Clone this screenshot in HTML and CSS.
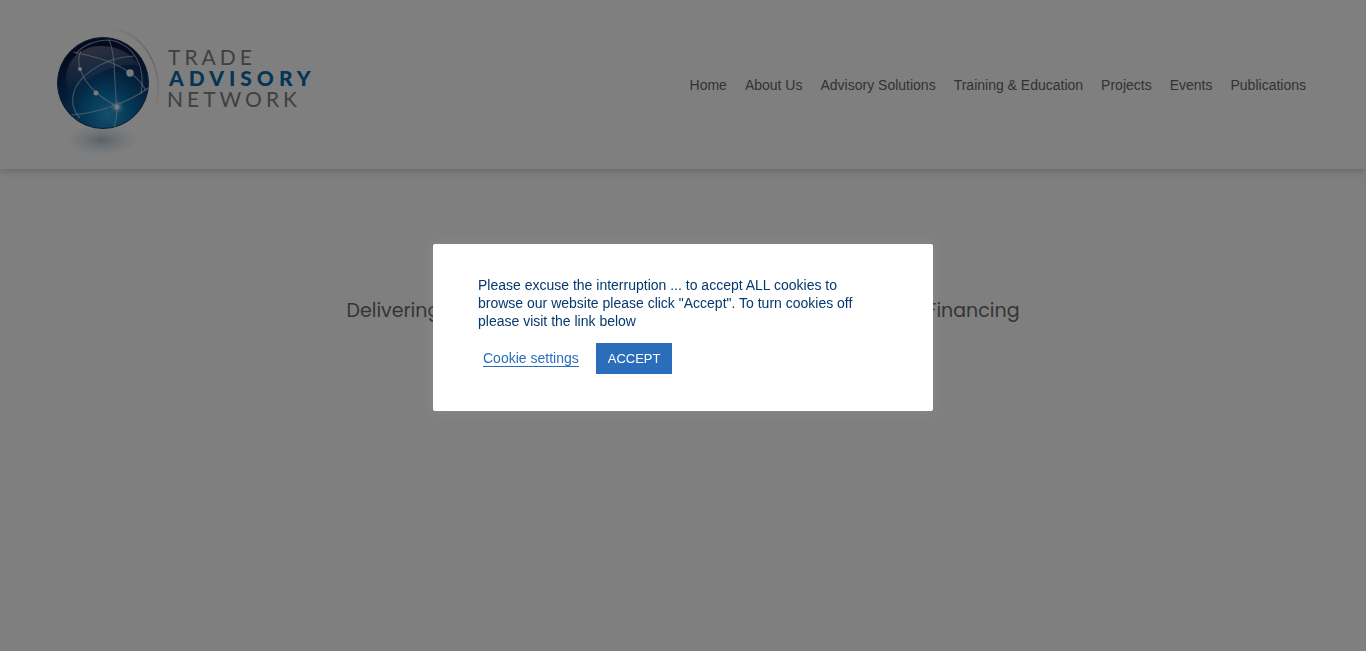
FILE: index.html
```html
<!DOCTYPE html>
<html lang="en">
<head>
<meta charset="utf-8">
<meta name="viewport" content="width=device-width, initial-scale=1">
<title>Trade Advisory Network</title>
<link rel="stylesheet" href="styles.css">
</head>
<body>
<header class="site-header">
  <a class="logo" href="#" aria-label="Trade Advisory Network">
    <svg class="logo-art" width="280" height="140" viewBox="40 20 280 140" aria-hidden="true">
      <defs>
        <radialGradient id="ball" cx="0.56" cy="0.85" r="0.85">
          <stop offset="0" stop-color="#2c9ed8"/>
          <stop offset="0.3" stop-color="#0870ae"/>
          <stop offset="0.6" stop-color="#0c3a70"/>
          <stop offset="0.9" stop-color="#0b1440"/>
        </radialGradient>
        <linearGradient id="gloss" x1="0.2" y1="0" x2="0.5" y2="1">
          <stop offset="0" stop-color="#fff" stop-opacity="0.36"/>
          <stop offset="0.8" stop-color="#fff" stop-opacity="0"/>
        </linearGradient>
        <linearGradient id="ring" x1="0" y1="0" x2="1" y2="1">
          <stop offset="0" stop-color="#ccc" stop-opacity="0.1"/>
          <stop offset="0.6" stop-color="#ccc"/>
          <stop offset="1" stop-color="#ccc" stop-opacity="0.3"/>
        </linearGradient>
        <radialGradient id="shade">
          <stop offset="0" stop-color="#7f9bb5" stop-opacity="0.6"/>
          <stop offset="0.5" stop-color="#9ab5ca" stop-opacity="0.3"/>
          <stop offset="1" stop-color="#9ab5ca" stop-opacity="0"/>
        </radialGradient>
        <radialGradient id="glow">
          <stop offset="0" stop-color="#fff" stop-opacity="0.9"/>
          <stop offset="1" stop-color="#7fd0ff" stop-opacity="0"/>
        </radialGradient>
      </defs>
      <ellipse cx="102" cy="140" rx="36" ry="15" fill="url(#shade)"/>
      <path d="M110 29C140 31 164 62 157 104" fill="none" stroke="url(#ring)" stroke-width="1.5"/>
      <circle cx="103" cy="83" r="45.5" fill="url(#ball)" stroke="#193f5b" stroke-width="1"/>
      <path d="M66 76C68 58 83 45 103 46C119 47 133 54 139 66C120 61 85 75 72 96C68 90 66 84 66 76Z" fill="url(#gloss)"/>
      <g fill="none" stroke="#c6daeb" stroke-opacity="0.65" stroke-width="1.1">
        <path d="M73 52C98 57 134 66 146 91"/>
        <path d="M76 54C81 47 93 40 110 40C135 45 146 67 141 94"/>
        <path d="M109 40C116 54 114 88 117 108C117 116 116 121 114 127"/>
        <path d="M81 51C76 62 80 71 86 81C93 92 103 98 117 107"/>
        <path d="M134 56C106 57 69 77 73 105C74 109 76 114 80 118"/>
        <path d="M72 115C95 113 127 104 148 88"/>
      </g>
      <circle cx="117" cy="107" r="7" fill="url(#glow)"/>
      <g fill="#eef4fa">
        <circle cx="80" cy="69" r="2"/>
        <circle cx="96" cy="93" r="2.5"/>
        <circle cx="130" cy="73" r="3.7"/>
        <circle cx="117" cy="107" r="2.2"/>
      </g>
      <g class="wordmark">
        <text x="168" y="65">TRADE</text>
        <text class="wordmark-strong" x="169" y="86">ADVISORY</text>
        <text x="167" y="107">NETWORK</text>
      </g>
    </svg>
  </a>
  <nav class="main-nav" aria-label="Main">
    <a href="#">Home</a>
    <a href="#">About Us</a>
    <a href="#">Advisory Solutions</a>
    <a href="#">Training &amp; Education</a>
    <a href="#">Projects</a>
    <a href="#">Events</a>
    <a href="#">Publications</a>
  </nav>
</header>
<main class="hero">
  <h1 class="tagline"><span>Delivering</span> <span>Financing</span></h1>
</main>
<div class="overlay">
  <section class="cookie-dialog" role="dialog" aria-modal="true" aria-labelledby="cookie-text">
    <p class="cookie-text" id="cookie-text">Please excuse the interruption ... to accept ALL cookies to browse our website please click "Accept". To turn cookies off please visit the link below</p>
    <div class="cookie-actions">
      <a class="cookie-settings" href="#">Cookie settings</a>
      <button class="cookie-accept" type="button">ACCEPT</button>
    </div>
  </section>
</div>
</body>
</html>
```
FILE: styles.css
```css
* {
  box-sizing: border-box;
}

body {
  margin: 0;
  background: #fff;
  color: #6a6a6a;
  font-family: "Liberation Sans", Arial, sans-serif;
}

.site-header {
  display: flex;
  align-items: center;
  justify-content: space-between;
  padding: 20px 60px 9px 40px;
  box-shadow: 0 0 10px rgba(0, 0, 0, 0.3);
}

.logo,
.logo-art {
  display: block;
}

.wordmark {
  fill: #808080;
  font-family: Lato, sans-serif;
  font-size: 21px;
  letter-spacing: 4px;
}

.wordmark-strong {
  fill: #0b6aa9;
  font-weight: 900;
  letter-spacing: 5px;
}

.main-nav {
  display: flex;
  flex-wrap: wrap;
  gap: 18px;
  padding-bottom: 10px;
}

.main-nav a {
  color: #666;
  font-size: 14px;
  line-height: 20px;
  text-decoration: none;
}

.hero {
  padding: 126px 20px;
}

.tagline {
  display: flex;
  justify-content: space-between;
  max-width: 673px;
  margin: 0 auto;
  font-family: Poppins, Inter, sans-serif;
  font-size: 19px;
  font-weight: 400;
  line-height: 32px;
}

.overlay {
  position: fixed;
  inset: 0;
  display: flex;
  align-items: center;
  justify-content: center;
  padding-top: 4px;
  background: rgba(0, 0, 0, 0.5);
}

.cookie-dialog {
  width: 500px;
  max-width: 100%;
  padding: 32px 45px 37px;
  border-radius: 2px;
  background: #fff;
  box-shadow: 0 0 12px rgba(255, 255, 255, 0.08);
  color: #063970;
}

.cookie-text {
  max-width: 400px;
  margin: 0 0 13px;
  font-size: 14px;
  line-height: 18px;
}

.cookie-actions {
  display: flex;
  align-items: center;
  gap: 17px;
  padding-left: 5px;
}

.cookie-settings {
  border-bottom: 1px solid #2a6ebb;
  color: #2a6ebb;
  font-size: 14px;
  line-height: 15px;
  text-decoration: none;
}

.cookie-accept {
  padding: 8px 12px;
  border: 0;
  background: #2a6ebb;
  color: #fff;
  font-family: inherit;
  font-size: 13px;
  line-height: 15px;
}
```
